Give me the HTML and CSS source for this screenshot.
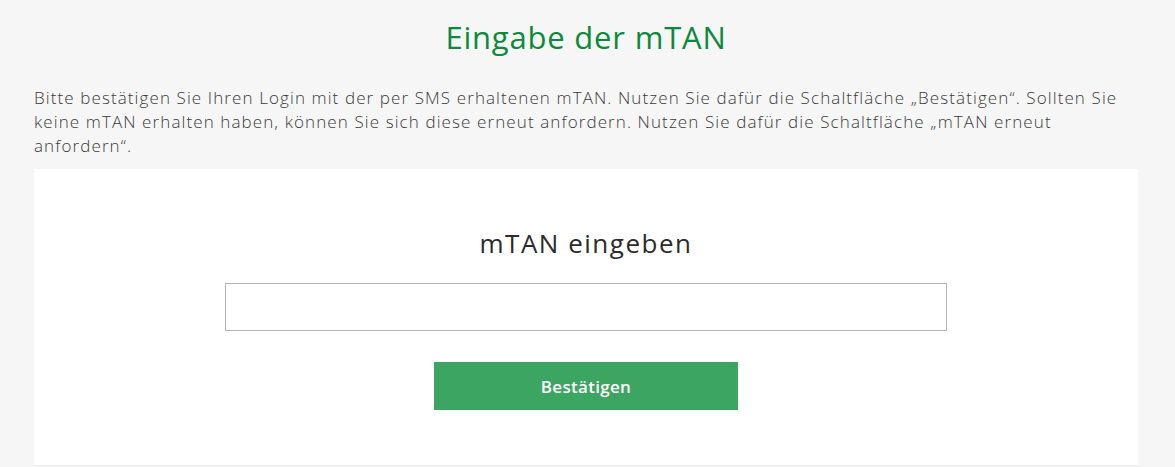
FILE: index.html
```html
<!DOCTYPE html>
<html lang="de">
<head>
    <meta charset="UTF-8">
    <title>Eingabe der mTAN</title>
    <link rel="stylesheet" href="styles.css">
</head>
<body>

<div class="page">
    <h1 class="page-title">Eingabe der mTAN</h1>

    <p class="intro">
        Bitte bestätigen Sie Ihren Login mit der per SMS erhaltenen mTAN. Nutzen Sie dafür die Schaltfläche „Bestätigen“. Sollten Sie
        keine mTAN erhalten haben, können Sie sich diese erneut anfordern. Nutzen Sie dafür die Schaltfläche „mTAN erneut
        anfordern“.
    </p>

    <div class="card">
        <h2 class="card-title">mTAN eingeben</h2>
        <input class="tan-input" type="text" aria-label="mTAN">
        <button class="btn-confirm" type="button">Bestätigen</button>
    </div>
</div>

</body>
</html>
```

FILE: styles.css
```css
body {
    margin: 0;
    background: #f6f6f6;
    font-family: "Open Sans", "Noto Sans", Arial, sans-serif;
    color: #3c3c3c;
}

.page {
    width: 1104px;
    margin: 0 0 0 34px;
}

.page-title {
    margin: 0;
    padding-top: 16px;
    text-align: center;
    font-size: 31px;
    font-weight: 400;
    letter-spacing: 0.8px;
    color: #0b8a3b;
    line-height: 42px;
}

.intro {
    margin: 28px 0 11px;
    font-size: 17px;
    font-weight: 300;
    line-height: 24px;
    letter-spacing: 1.1px;
    color: #3a3a3a;
}

.card {
    background: #fff;
    border-bottom: 1px solid #ececec;
    height: 297px;
    display: flex;
    flex-direction: column;
    align-items: center;
    box-sizing: border-box;
    padding-top: 56px;
}

.card-title {
    margin: 0 0 22px;
    font-size: 26px;
    font-weight: 400;
    line-height: 36px;
    letter-spacing: 1.5px;
    color: #2b2b2b;
}

.tan-input {
    width: 722px;
    height: 48px;
    box-sizing: border-box;
    border: 1px solid #b3b3b3;
    font-size: 18px;
    padding: 0 10px;
    outline: none;
}

.btn-confirm {
    margin-top: 31px;
    width: 304px;
    height: 48px;
    background-color: #3ca562;
    color: #fff;
    border: none;
    font-family: inherit;
    font-size: 17px;
    font-weight: 600;
    letter-spacing: 0.3px;
    cursor: pointer;
}

.btn-confirm:hover {
    background-color: #339455;
}
```
